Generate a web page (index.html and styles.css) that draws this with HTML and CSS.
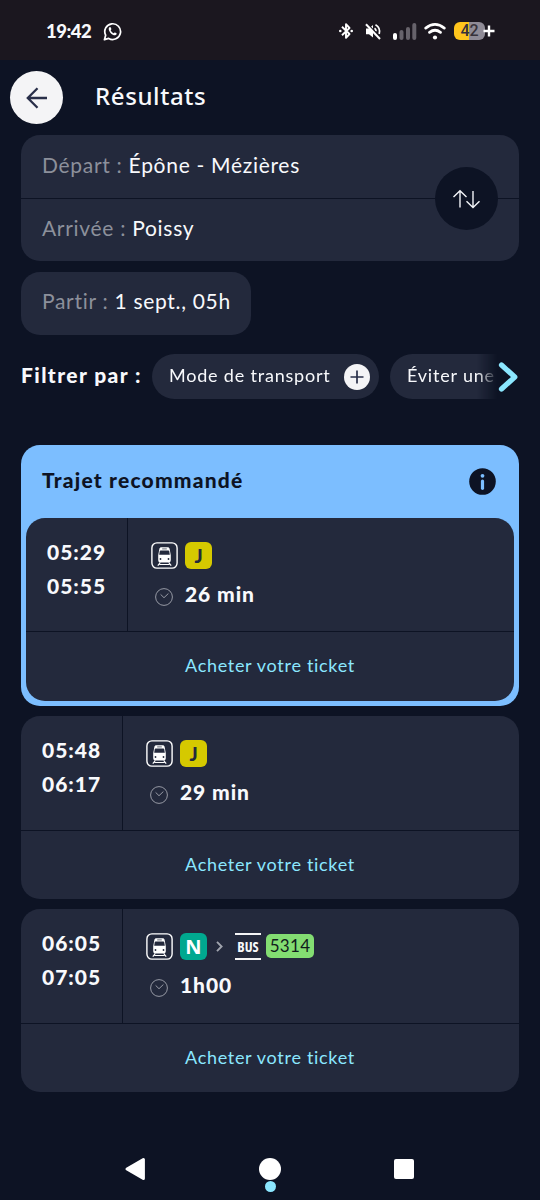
FILE: index.html
```html
<!DOCTYPE html>
<html lang="fr">
<head>
<meta charset="utf-8">
<title>Résultats</title>
<link rel="stylesheet" href="styles.css">
</head>
<body>
<svg class="defs" width="0" height="0">
  <defs>
    <symbol id="train" viewBox="0 0 27 27">
      <rect x=".9" y=".9" width="25.200" height="25.200" rx="5" fill="none" stroke="#fff" stroke-width="1.400"/>
      <path d="M10.500 5.300h6c1.300 0 1.900.6 2.200 1.900l1.100 6.100v4.600c0 1.700-.9 2.600-2.300 2.600h-8c-1.400 0-2.300-.9-2.300-2.600v-4.600l1.100-6.100c.3-1.300.9-1.900 2.200-1.900z" fill="#fff"/>
      <path d="M9.600 8.600h7.800c.6 0 .8.300.9.900l.5 3.200H8.200l.5-3.200c.1-.6.300-.9.900-.9z" fill="#23293c"/>
      <path d="M11.200 6.900h4.600" stroke="#23293c" stroke-width=".7"/>
      <circle cx="9.500" cy="17" r=".9" fill="#23293c"/><circle cx="17.500" cy="17" r=".9" fill="#23293c"/>
      <path d="M9.300 20.500 6.800 23.700M17.700 20.500l2.500 3.200M8.500 22.500h10" fill="none" stroke="#fff" stroke-width="1.200"/>
    </symbol>
    <symbol id="clock" viewBox="0 0 18 18">
      <circle cx="9" cy="9" r="8.400"/><path d="M5.600 6.400 9 9.700l4.400-4.200"/>
    </symbol>
  </defs>
</svg>
<div class="status">
  <span class="time">19:42</span>
  <svg class="whatsapp" viewBox="0 0 20 20" fill="none" stroke="#fff">
    <path d="M1.500 18.600l1.300-4.700A8.300 8.300 0 1 1 6 17.300z" stroke-width="1.800" stroke-linejoin="round"/>
    <path d="M6.800 5.600c.6-.5 1.200-.2 1.500.5l.5 1.200c.1.500-.6 1-.7 1.400.6 1.500 1.700 2.500 3.100 3.100.5-.1.900-1 1.500-.8l1.500.8c.5.400-.1 1.700-.9 2-1.300.6-3.400-.4-4.900-1.800C6.800 10.300 5 7.200 6.800 5.600z" fill="#fff" stroke="none"/>
  </svg>
  <div class="indicators">
    <svg class="bluetooth" viewBox="0 0 14 18" fill="none" stroke="#fff" stroke-width="1.900">
      <path d="M3 4.800 10.500 12 7 15.800V2.200L10.500 6 3 13.200" stroke-linejoin="round"/>
      <circle cx="1.300" cy="9" r="1.300" fill="#fff" stroke="none"/><circle cx="12.700" cy="9" r="1.300" fill="#fff" stroke="none"/>
    </svg>
    <svg class="mute" viewBox="0 0 17 17" fill="none" stroke="#fff" stroke-width="1.700">
      <path d="M1 5.500h3l4-3.500v12.500L4 11.200H1z" fill="#fff" stroke="none"/>
      <path d="M9.500 5.200q1.500 1 1.600 3M10.500 1.700q5.400 3.200 3.700 9.300"/>
      <path d="M2.300.8 16 15" stroke="#1b171f" stroke-width="1.600"/><path d="M1 1.300 15 16" stroke-width="2"/>
    </svg>
    <svg class="signal" viewBox="0 0 24 17">
      <rect x="0" y="10" width="4" height="7" rx="2" fill="#fff"/>
      <g fill="#67636b"><rect x="6.500" y="7" width="4" height="10" rx="2"/><rect x="13" y="4" width="4" height="13" rx="2"/><rect x="19.300" y="0" width="4" height="17" rx="2"/></g>
    </svg>
    <svg class="wifi" viewBox="0 0 22 17" fill="none" stroke="#fff" stroke-width="2.700" stroke-linecap="round">
      <path d="M1.700 5.100Q11-2.200 20.300 5.100M5.500 9.400q5.500-4.300 11 0"/><circle cx="11" cy="14.500" r="2.100" fill="#fff" stroke="none"/>
    </svg>
    <div class="battery"><span>42</span></div>
    <svg class="charge" viewBox="0 0 12 12"><path d="M6 .5v11M.5 6h11" stroke="#fff" stroke-width="2.400"/></svg>
  </div>
</div>

<header class="header">
  <div class="back"><svg width="22" height="22" viewBox="0 0 22 22" fill="none" stroke="#292f49" stroke-width="2.300"><path d="M21 11H2M11.500 1.300 1.800 11l9.700 9.700"/></svg></div>
  <h1 class="title">Résultats</h1>
</header>

<main class="content">
  <section class="search">
    <div class="field field-top"><span class="label">Départ :</span> <span>Épône - Mézières</span></div>
    <div class="field"><span class="label">Arrivée :</span> <span>Poissy</span></div>
    <div class="swap"><svg width="28" height="20" viewBox="0 0 28 20" fill="none" stroke="#f2f4f8" stroke-width="1.400"><path d="M8 18.500V2M1.500 8 8 1.700 14.500 8M21 2v16.500M14.500 12.200 21 18.500l6.500-6.300"/></svg></div>
  </section>
  <div class="departure"><span class="label">Partir :</span> <span>1 sept., 05h</span></div>

  <section class="filters">
    <span class="filter-title">Filtrer par :</span>
    <div class="chips">
      <div class="chip"><span>Mode de transport</span>
        <svg width="26" height="26" viewBox="0 0 26 26"><circle cx="13" cy="13" r="13" fill="#f4f4f6"/><path d="M13 6.500v13M6.500 13h13" stroke="#292f49" stroke-width="1.700"/></svg>
      </div>
      <div class="chip"><span>Éviter une</span></div>
    </div>
    <svg class="next" width="20" height="30" viewBox="0 0 20 30" fill="none" stroke="#8be7ff" stroke-width="5.200" stroke-linecap="round" stroke-linejoin="round"><path d="M3.500 3l13.300 12L3.500 27"/></svg>
  </section>

  <section class="recommended">
    <div class="rec-head"><h2>Trajet recommandé</h2>
      <svg width="27" height="27" viewBox="0 0 27 27"><circle cx="13.500" cy="13.500" r="13.300" fill="#0d1324"/><circle cx="13.500" cy="7.800" r="1.900" fill="#7cbeff"/><path d="M13.500 13v7.300" stroke="#7cbeff" stroke-width="3.200" stroke-linecap="round"/></svg>
    </div>
    <article class="trip">
      <div class="trip-main">
        <div class="times"><span>05:29</span><span>05:55</span></div>
        <div class="route">
          <div class="lines"><svg class="train"><use href="#train"/></svg><span class="line line-j">J</span></div>
          <div class="duration"><svg class="clock"><use href="#clock"/></svg><span>26 min</span></div>
        </div>
      </div>
      <div class="buy">Acheter votre ticket</div>
    </article>
  </section>

  <article class="trip">
    <div class="trip-main">
      <div class="times"><span>05:48</span><span>06:17</span></div>
      <div class="route">
        <div class="lines"><svg class="train"><use href="#train"/></svg><span class="line line-j">J</span></div>
        <div class="duration"><svg class="clock"><use href="#clock"/></svg><span>29 min</span></div>
      </div>
    </div>
    <div class="buy">Acheter votre ticket</div>
  </article>

  <article class="trip">
    <div class="trip-main">
      <div class="times"><span>06:05</span><span>07:05</span></div>
      <div class="route">
        <div class="lines"><svg class="train"><use href="#train"/></svg><span class="line line-n">N</span>
          <svg class="sep" width="7" height="11" viewBox="0 0 7 11" fill="none" stroke="#a0a4ae" stroke-width="1.900"><path d="M1 .8l4.600 4.700L1 10.200"/></svg>
          <span class="bus">BUS</span><span class="bus-line">5314</span></div>
        <div class="duration"><svg class="clock"><use href="#clock"/></svg><span>1h00</span></div>
      </div>
    </div>
    <div class="buy">Acheter votre ticket</div>
  </article>
</main>

<nav class="navbar">
  <svg width="22" height="24" viewBox="0 0 22 24"><path d="M3 12 19.400 2.600v18.800z" fill="#fff" stroke="#fff" stroke-width="3" stroke-linejoin="round"/></svg>
  <div class="home"><span class="dot"></span></div>
  <div class="recent"></div>
</nav>
</body>
</html>
```

FILE: styles.css
```css
* { box-sizing: border-box; }
body {
  margin: 0;
  width: 540px;
  height: 1200px;
  overflow: hidden;
  display: flex;
  flex-direction: column;
  background: #0d1324;
  color: #f8f9fc;
  font-family: Lato, sans-serif;
}
svg { display: block; flex: none; }
.defs { position: absolute; }

.status {
  height: 60px;
  flex: none;
  display: flex;
  align-items: center;
  padding: 2px 45px 0 46px;
  background: #1b171f;
}
.time { font: 900 18.500px/24px Lato, sans-serif; width: 57px; padding-bottom: 1px; white-space: nowrap; letter-spacing: -.5px; }
.whatsapp { width: 19px; height: 19px; }
.indicators { margin-left: auto; display: flex; align-items: center; }
.bluetooth { width: 14px; height: 18px; margin-right: 12px; }
.mute { width: 17px; height: 17px; margin-right: 11px; }
.signal { width: 24px; height: 17px; margin-right: 7px; }
.wifi { width: 22px; height: 17px; margin-right: 8px; }
.battery {
  width: 31px;
  height: 18px;
  border-radius: 6px;
  background: linear-gradient(90deg, #ffc51c 47%, #8f8b96 47%);
  color: #37323a;
  font: 500 16px/18px Roboto, sans-serif;
  text-align: center;
}
.charge { width: 12px; height: 12px; margin-left: -2px; }

.header {
  height: 75px;
  flex: none;
  display: flex;
  align-items: center;
  padding-left: 10px;
}
.back {
  width: 53px;
  height: 53px;
  border-radius: 50%;
  background: #f4f4f6;
  display: grid;
  place-items: center;
}
.title { margin: 0 0 3px 32px; font: 500 24px/32px "Noto Sans", sans-serif; letter-spacing: .6px; }

.content { padding: 0 21px; }
.label { color: #8c909b; }
.search, .departure { background: #23293c; border-radius: 19px; font-size: 21px; letter-spacing: .7px; }
.search { position: relative; height: 126px; }
.field { height: 63px; padding: 0 21px; line-height: 59px; white-space: nowrap; }
.field-top { height: 64px; border-bottom: 1px solid #0d1324; }
.field-top + .field { height: 62px; line-height: 57px; }
.swap {
  position: absolute;
  right: 21px;
  top: 32px;
  width: 63px;
  height: 63px;
  padding-right: 2px;
  border-radius: 50%;
  background: #0d1324;
  display: grid;
  place-items: center;
}
.departure { width: 230px; height: 63px; margin-top: 11px; padding-left: 21px; line-height: 58px; white-space: nowrap; }

.filters { height: 45px; margin-top: 19px; display: flex; align-items: center; }
.filter-title { width: 131px; flex: none; font-size: 21px; font-weight: 900; letter-spacing: 1.400px; line-height: 42px; padding-bottom: 3px; white-space: nowrap; }
.chips {
  width: 346px;
  display: flex;
  gap: 11px;
  overflow: hidden;
  -webkit-mask-image: linear-gradient(90deg, #000 325px, transparent 346px);
  mask-image: linear-gradient(90deg, #000 325px, transparent 346px);
}
.chip {
  width: 227px;
  height: 45px;
  flex: none;
  display: flex;
  align-items: center;
  justify-content: space-between;
  padding: 0 9px 0 17px;
  border-radius: 23px;
  background: #23293c;
  font-size: 18px;
  letter-spacing: .8px;
  white-space: nowrap;
}
.chip span { padding-bottom: 3px; }

.recommended { height: 261px; margin-top: 46px; padding: 0 5px 5px; border-radius: 19px; background: #7cbeff; }
.rec-head { height: 73px; display: flex; align-items: center; justify-content: space-between; padding: 0 18px 0 16px; color: #0d1324; }
.rec-head h2 { margin: 0 0 4px; font-size: 21px; font-weight: 900; letter-spacing: 1.200px; line-height: 28px; }

.trip { height: 183px; background: #23293c; border-radius: 19px; overflow: hidden; }
.content > .trip { margin-top: 10px; }
.trip-main { height: 114px; display: flex; border-bottom: 1px solid #0d1324; }
.content > .trip > .trip-main { height: 115px; }
.times {
  width: 102px;
  padding: 17px 0 0 21px;
  border-right: 1px solid #0d1324;
  display: flex;
  flex-direction: column;
  font-size: 21px;
  font-weight: 900;
  line-height: 34px;
  letter-spacing: 1px;
}
.route { padding: 23px 0 0 23px; }
.lines { display: flex; align-items: center; height: 28px; }
.train { width: 27px; height: 27px; margin-right: 7px; }
.line { width: 27px; height: 27px; border-radius: 6px; display: grid; place-items: center; font: 700 20px/27px "Noto Sans", sans-serif; }
.line-j { background: #d5c900; color: #23293c; font: 900 19px/27px Lato, sans-serif; }
.line-n { background: #00a88f; color: #fff; }
.sep { margin: 0 12px 0 9px; }
.bus { width: 26px; height: 27px; border: solid #f4f4f6; border-width: 2px 0; font: 700 14px/23px "Open Sans", sans-serif; font-stretch: 75%; display: grid; place-items: center; margin-right: 5px; }
.bus-line { width: 48px; height: 24px; border-radius: 5px; background: #83dd72; color: #111c1c; font-size: 17px; line-height: 23px; text-align: center; letter-spacing: .3px; }
.duration { display: flex; align-items: center; margin-top: 11px; height: 28px; font-size: 21px; font-weight: 900; letter-spacing: .9px; white-space: nowrap; }
.duration span { padding-bottom: 2px; }
.clock { width: 18px; height: 18px; margin: 5px 12px 0 4px; fill: none; stroke: #9699a4; stroke-width: 1; }
.buy { height: 68px; line-height: 66px; text-align: center; color: #8be7ff; font-size: 18px; letter-spacing: .7px; }

.navbar { margin-top: auto; height: 63px; flex: none; display: flex; justify-content: space-between; align-items: center; padding: 0 126px 0 124px; }
.home { position: relative; width: 22px; height: 22px; border-radius: 50%; background: #fff; }
.dot { position: absolute; left: 6px; top: 23px; width: 11px; height: 11px; border-radius: 50%; background: #8be7ff; }
.recent { width: 20px; height: 20px; border-radius: 2px; background: #fff; }
```
